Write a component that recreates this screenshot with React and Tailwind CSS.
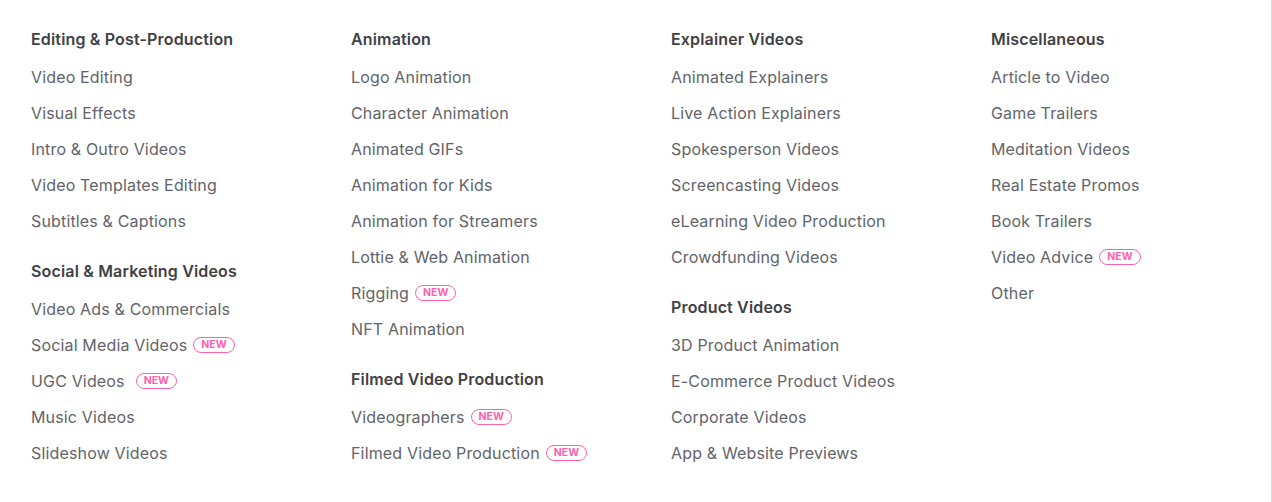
const columns = [
  [
    { title: "Editing & Post-Production", items: [["Video Editing"], ["Visual Effects"], ["Intro & Outro Videos"], ["Video Templates Editing"], ["Subtitles & Captions"]] },
    { title: "Social & Marketing Videos", items: [["Video Ads & Commercials"], ["Social Media Videos", true], ["UGC Videos", true, true], ["Music Videos"], ["Slideshow Videos"]] },
  ],
  [
    { title: "Animation", items: [["Logo Animation"], ["Character Animation"], ["Animated GIFs"], ["Animation for Kids"], ["Animation for Streamers"], ["Lottie & Web Animation"], ["Rigging", true], ["NFT Animation"]] },
    { title: "Filmed Video Production", items: [["Videographers", true], ["Filmed Video Production", true]] },
  ],
  [
    { title: "Explainer Videos", items: [["Animated Explainers"], ["Live Action Explainers"], ["Spokesperson Videos"], ["Screencasting Videos"], ["eLearning Video Production"], ["Crowdfunding Videos"]] },
    { title: "Product Videos", items: [["3D Product Animation"], ["E-Commerce Product Videos"], ["Corporate Videos"], ["App & Website Previews"]] },
  ],
  [
    { title: "Miscellaneous", items: [["Article to Video"], ["Game Trailers"], ["Meditation Videos"], ["Real Estate Promos"], ["Book Trailers"], ["Video Advice", true], ["Other"]] },
  ],
];

function Badge({ wide }) {
  return (
    <span className={`${wide ? "ml-[11px]" : "ml-[6px]"} inline-flex h-[16px] items-center rounded-full border border-[#ff62ad] px-[7px] text-[10.5px] font-bold leading-none tracking-normal text-[#ff62ad]`}>
      NEW
    </span>
  );
}

export default function App() {
  return (
    <div className="flex h-[502px] w-[1272px] bg-white" style={{ fontFamily: "Inter, 'Noto Sans', sans-serif" }}>
      <div className="grid flex-1 grid-cols-[320px_320px_320px_1fr] pl-[31px] pt-[27px]">
        {columns.map((col, ci) => (
          <div key={ci} className="flex flex-col gap-[26px]">
            {col.map((sec) => (
              <div key={sec.title} className="flex flex-col">
                <div className="mb-[14px] h-6 text-[16px] font-semibold leading-6 tracking-[0.01em] text-[#404145]">{sec.title}</div>
                <div className="flex flex-col gap-3">
                  {sec.items.map(([name, isNew, wide]) => (
                    <div key={name} className="flex h-6 items-center text-[16px] leading-6 tracking-[0.01em] text-[#62646a]">
                      <span>{name}</span>
                      {isNew && <Badge wide={wide} />}
                    </div>
                  ))}
                </div>
              </div>
            ))}
          </div>
        ))}
      </div>
      <div className="w-px bg-[#dadbdd]" />
    </div>
  );
}
